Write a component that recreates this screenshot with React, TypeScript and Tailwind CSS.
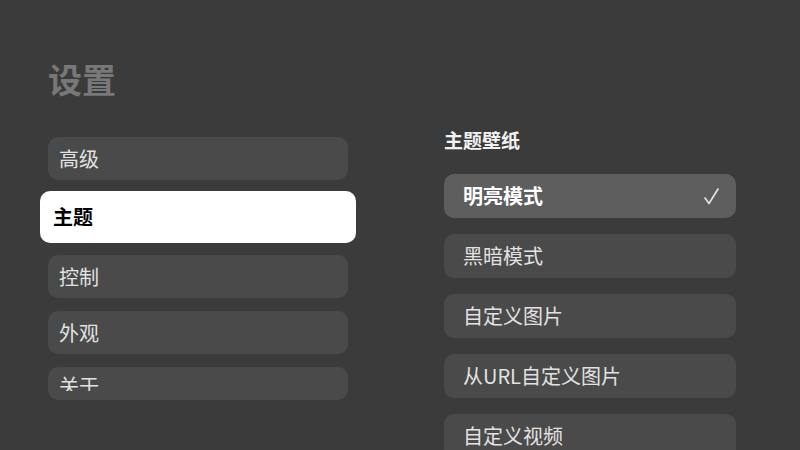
import React from "react";

const font = { fontFamily: '"Noto Sans CJK SC", "Noto Sans", sans-serif' };

function LeftItem({ label }: { label: string }) {
  return (
    <div className="h-[43px] shrink-0 rounded-[10px] bg-[#4a4a4a] flex items-center pl-[11px] text-[20px] text-[#e2e2e2] leading-none">
      {label}
    </div>
  );
}

function RightItem({ label, selected }: { label: string; selected?: boolean }) {
  return (
    <div
      className={
        selected
          ? "h-[44px] shrink-0 rounded-[10px] bg-[#5e5e5e] flex items-center justify-between pl-[19px] pr-[16px] text-[20px] font-bold text-white leading-none"
          : "h-[44px] shrink-0 rounded-[10px] bg-[#4a4a4a] flex items-center pl-[19px] text-[20px] text-[#e2e2e2] leading-none"
      }
    >
      <span>{label}</span>
      {selected && (
        <svg width="16" height="17" viewBox="0 0 16 17">
          <polyline points="1,10 5,15.5 14,1" fill="none" stroke="#e6e6e6" strokeWidth="1.6" strokeLinecap="round" strokeLinejoin="round" />
        </svg>
      )}
    </div>
  );
}

export default function App() {
  return (
    <div className="w-[800px] h-[450px] overflow-hidden bg-[#3b3b3b] flex" style={font}>
      <div className="w-[300px] ml-[48px] flex flex-col">
        <div className="mt-[59px] h-[40px] text-[34px] font-bold text-[#787878] leading-none flex items-center">设置</div>
        <div className="mt-[38px] flex flex-col">
          <LeftItem label="高级" />
          <div className="mt-[11px] -mx-[8px] h-[52px] rounded-[10px] bg-white flex items-center pl-[13px] text-[20px] font-bold text-black leading-none">
            主题
          </div>
          <div className="mt-[12px]">
            <LeftItem label="控制" />
          </div>
          <div className="mt-[13px]">
            <LeftItem label="外观" />
          </div>
          <div className="mt-[13px] h-[33px] rounded-[10px] bg-[#4a4a4a] pl-[11px] pt-[9px] overflow-hidden">
            <div className="h-[15px] overflow-hidden text-[20px] text-[#e2e2e2] leading-none">关于</div>
          </div>
        </div>
      </div>
      <div className="w-[292px] ml-[96px] flex flex-col">
        <div className="mt-[130px] text-[19px] font-bold text-[#f2f2f2] leading-none">主题壁纸</div>
        <div className="mt-[25px] flex flex-col gap-[16px]">
          <RightItem label="明亮模式" selected />
          <RightItem label="黑暗模式" />
          <RightItem label="自定义图片" />
          <RightItem label="从URL自定义图片" />
          <RightItem label="自定义视频" />
        </div>
      </div>
    </div>
  );
}
